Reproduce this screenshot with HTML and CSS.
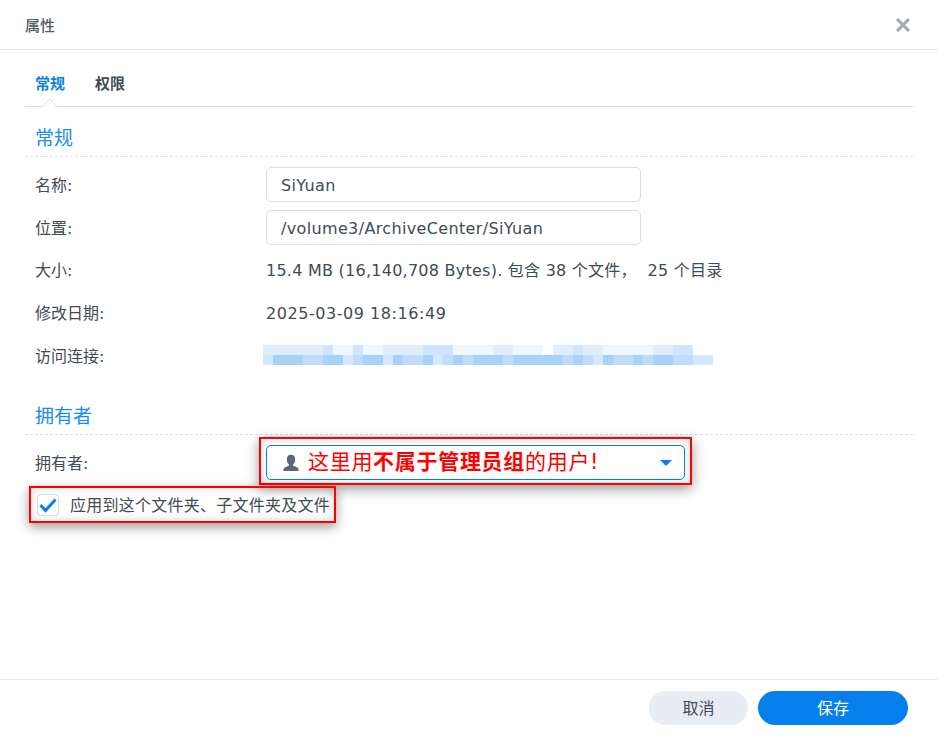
FILE: index.html
```html
<!DOCTYPE html>
<html lang="zh">
<head>
<meta charset="utf-8">
<title>属性</title>
<link rel="stylesheet" href="styles.css">
</head>
<body>
<div class="dialog">
  <header class="head">
    <span class="head-title">属性</span>
    <svg class="close" width="14" height="14" viewBox="0 0 14 14"><path d="M1 1l12 12M13 1L1 13" stroke="#a6adb6" stroke-width="3.200" fill="none"/></svg>
  </header>
  <main class="body">
    <nav class="tabs">
      <span class="tab active">常规</span>
      <span class="tab">权限</span>
      <svg class="tab-notch" width="16" height="8" viewBox="0 0 16 8"><path d="M0 8L8 0l8 8" fill="#fff" stroke="#d5e0ec"/></svg>
    </nav>
    <h2 class="section first">常规</h2>
    <div class="row input-row"><label class="label">名称:</label><div class="input">SiYuan</div></div>
    <div class="row input-row"><label class="label">位置:</label><div class="input">/volume3/ArchiveCenter/SiYuan</div></div>
    <div class="row text-row"><label class="label">大小:</label><span class="value">15.4 MB (16,140,708 Bytes). 包含 38 个文件，  25 个目录</span></div>
    <div class="row text-row"><label class="label">修改日期:</label><span class="value date">2025-03-09 18:16:49</span></div>
    <div class="row text-row"><label class="label">访问连接:</label>
      <svg class="mosaic" width="450" height="20" viewBox="0 0 45 2" shape-rendering="crispEdges">
        <g fill="#e0eefc"><rect x="0" y="0" width="43" height="1"/></g>
        <g fill="#eef6fe"><rect x="7" y="0" width="2" height="1"/><rect x="10" y="0" width="2" height="1"/><rect x="19" y="0" width="4" height="1"/><rect x="25" y="0" width="3" height="1"/><rect x="34" y="0" width="5" height="1"/></g>
        <g fill="#cfe5fd"><rect x="6" y="0" width="1" height="1"/><rect x="9" y="0" width="1" height="1"/><rect x="16" y="0" width="2" height="1"/><rect x="18" y="0" width="1" height="1"/><rect x="31" y="0" width="1" height="1"/><rect x="41" y="0" width="2" height="1"/></g>
        <rect x="28" y="0" width="1" height="1" fill="#fff"/>
        <rect x="0" y="1" width="45" height="1" fill="#bfddfa"/>
        <g fill="#a8d2f9"><rect x="1" y="1" width="3" height="1"/><rect x="6" y="1" width="2" height="1"/><rect x="10" y="1" width="2" height="1"/><rect x="13" y="1" width="1" height="1"/><rect x="16" y="1" width="1" height="1"/><rect x="19" y="1" width="1" height="1"/><rect x="21" y="1" width="3" height="1"/><rect x="25" y="1" width="5" height="1"/><rect x="31" y="1" width="1" height="1"/><rect x="34" y="1" width="1" height="1"/><rect x="37" y="1" width="1" height="1"/><rect x="39" y="1" width="2" height="1"/></g>
        <g fill="#d3e8fd"><rect x="0" y="1" width="1" height="1"/><rect x="8" y="1" width="1" height="1"/><rect x="12" y="1" width="1" height="1"/><rect x="17" y="1" width="1" height="1"/><rect x="33" y="1" width="1" height="1"/><rect x="43" y="1" width="2" height="1"/></g>
      </svg>
    </div>
    <h2 class="section second">拥有者</h2>
    <div class="row owner-row">
      <label class="label">拥有者:</label>
      <div class="select">
        <svg class="user" width="18" height="18" viewBox="0 0 18 18"><path d="M9 .8c2.700 0 4.200 1.900 4.200 4.600 0 2.200-1 3.900-2 4.900v1.400c1.800.8 3.800 1.300 4.800 2.300.5.500.6 1.700.6 3H1.400c0-1.300.1-2.500.6-3 1-1 3-1.500 4.800-2.300v-1.400c-1-1-2-2.700-2-4.900C4.800 2.700 6.300.8 9 .8z" fill="#5d6874"/></svg>
        <span class="note">这里用<b>不属于管理员组</b>的用户!</span>
        <svg class="caret" width="12" height="6" viewBox="0 0 12 6"><path d="M0 0h12L6 6z" fill="#0a80e8"/></svg>
        <span class="callout callout-select"></span>
      </div>
    </div>
    <div class="check-row">
      <span class="checkbox"><svg width="22" height="22" viewBox="0 0 22 22"><path d="M3.500 11l5 5.500 10-11" stroke="#0a80e8" stroke-width="3" fill="none"/></svg></span>
      <span class="check-label">应用到这个文件夹、子文件夹及文件</span>
      <span class="callout callout-check"></span>
    </div>
  </main>
  <footer class="foot">
    <button class="btn cancel">取消</button>
    <button class="btn save">保存</button>
  </footer>
</div>
</body>
</html>
```
FILE: styles.css
```css
* { box-sizing: border-box; }
html, body { margin: 0; height: 100%; background: #fff; }
body {
  font-family: "DejaVu Sans", "Noto Sans CJK SC", sans-serif;
  font-size: 16px;
  color: #414b55;
}
.dialog { width: 938px; height: 738px; display: flex; flex-direction: column; }
.head {
  height: 50px;
  flex: none;
  border-bottom: 1px solid #e6e9ee;
  display: flex;
  align-items: center;
  justify-content: space-between;
  padding: 0 28px 0 25px;
}
.head-title { font-size: 15px; font-weight: 500; color: #525a64; line-height: 20px; margin-top: 3px; }
.close { display: block; margin-top: 1px; }
.body { flex: 1; padding: 0 25px; }
.tabs {
  position: relative;
  height: 57px;
  border-bottom: 1px solid #d5e0ec;
  display: flex;
  gap: 30px;
  padding: 24px 10px 0;
}
.tab { font-size: 15px; font-weight: 700; line-height: 20px; color: #414b55; }
.tab.active { color: #0a80e8; }
.tab-notch { position: absolute; left: 17px; bottom: -1px; }
.section {
  margin: 0;
  padding-left: 10px;
  font-size: 19px;
  font-weight: 400;
  color: #1a8cf0;
  line-height: 26px;
  border-bottom: 1px dashed #d9e0e8;
}
.section.first { height: 50px; padding-top: 18px; }
.section.second { height: 56px; margin-top: 2px; padding-top: 24px; }
.row { display: flex; align-items: center; padding-left: 10px; }
.label { width: 231px; flex: none; line-height: 20px; padding-top: 2px; }
.input-row { height: 35px; margin-top: 8px; }
.section.first + .input-row { margin-top: 10px; }
.input {
  width: 375px;
  height: 35px;
  border: 1px solid #d5dfe9;
  border-radius: 5px;
  padding: 0 14px;
  font-size: 16px;
  letter-spacing: .35px;
  line-height: 35px;
  color: #414b55;
}
.text-row { height: 43px; }
.input-row + .text-row { margin-top: 3px; }
.value { font-size: 16px; letter-spacing: .25px; line-height: 20px; padding-top: 2px; white-space: pre; }
.value.date { letter-spacing: .55px; }
.mosaic { display: block; margin: -2px 0 0 -3px; }
.owner-row { height: 35px; margin-top: 10px; }
.select {
  position: relative;
  width: 419px;
  height: 35px;
  border: 1px solid #0a80e8;
  border-radius: 5px;
  background: #fff;
  display: flex;
  align-items: center;
  padding: 0 12px 0 15px;
}
.user { flex: none; }
.note { flex: 1; margin-left: 8px; padding-bottom: 2px; font-size: 21px; letter-spacing: .7px; color: #f00; line-height: 28px; white-space: nowrap; }
.note b { font-weight: 700; }
.caret { flex: none; }
.callout {
  position: absolute;
  border: 2px solid #f00;
  box-shadow: 0 4px 12px rgba(0,0,0,.4), inset 0 0 10px rgba(0,0,0,.16);
  pointer-events: none;
}
.callout-select { left: -8px; right: -8px; top: -9px; bottom: -6px; }
.callout-check { left: 0; right: -1px; top: -1px; bottom: -1px; }
.check-row {
  position: relative;
  width: 306px;
  height: 35px;
  margin: 7px 0 0 4px;
  display: flex;
  align-items: center;
  padding-left: 8px;
}
.checkbox {
  width: 22px;
  height: 22px;
  flex: none;
  border: 1px solid #d5dfe9;
  border-radius: 4px;
  background: #fff;
  display: flex;
}
.checkbox svg { margin: -1px; flex: none; }
.check-label { margin-left: 11px; padding-top: 2px; font-size: 16px; letter-spacing: .25px; line-height: 20px; white-space: nowrap; }
.foot {
  height: 59px;
  flex: none;
  border-top: 1px solid #e6e9ee;
  display: flex;
  justify-content: flex-end;
  gap: 10px;
  padding: 11px 30px 0 0;
}
.btn {
  height: 34px;
  border: 0;
  border-radius: 17px;
  font: inherit;
  font-size: 16px;
  padding: 0 0 2px;
}
.cancel { width: 99px; background: #e8ecf3; color: #414b55; }
.save { width: 150px; background: #057feb; color: #fff; }
```
